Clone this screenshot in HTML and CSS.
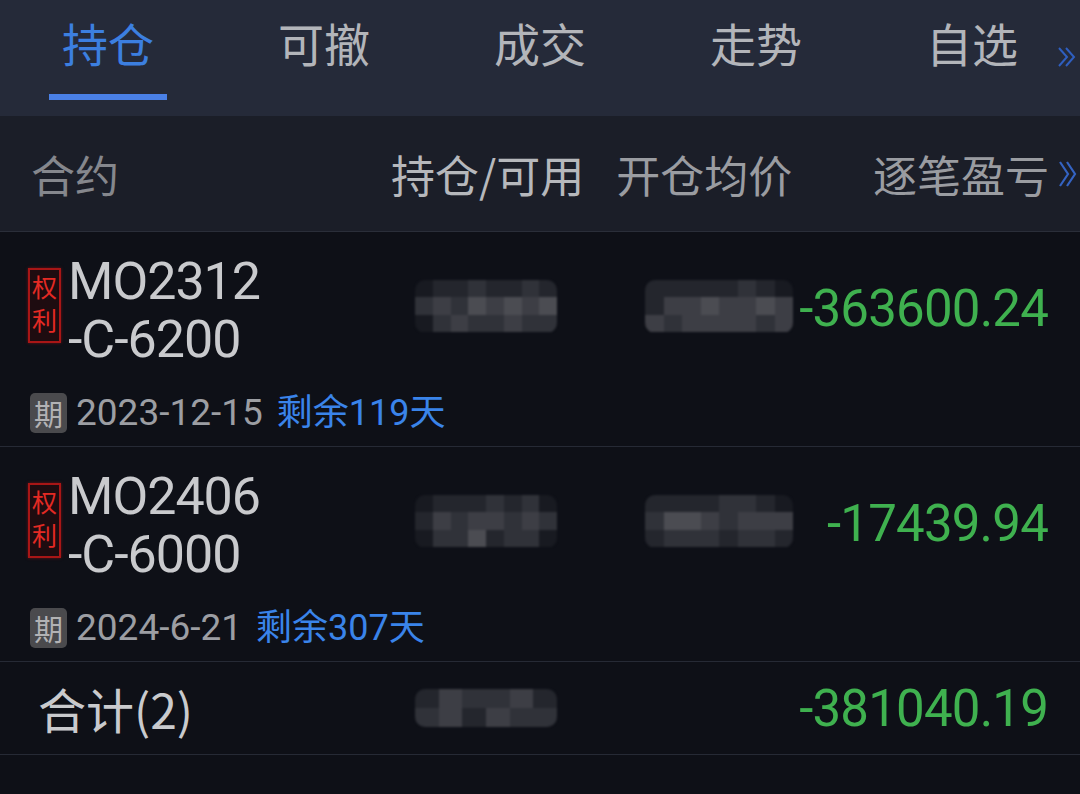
FILE: index.html
```html
<!DOCTYPE html>
<html lang="zh-CN">
<head>
    <meta charset="UTF-8">
    <meta name="viewport" content="width=device-width, initial-scale=1.0">
    <title>持仓</title>
<link rel="stylesheet" href="styles.css">
</head>
<body>
<div class="app">
    <nav class="tabs">
        <div class="tab active">持仓</div>
        <div class="tab">可撤</div>
        <div class="tab">成交</div>
        <div class="tab">走势</div>
        <div class="tab">自选</div>
        <svg class="more tabsMore" width="22" height="24" viewBox="0 0 22 24"><path d="M3 3 L11 12 L3 21 M10 3 L18 12 L10 21" fill="none" stroke="currentColor" stroke-width="2"/></svg>
    </nav>

    <div class="head">
        <div class="hContract">合约</div>
        <div class="hHold">持仓/可用</div>
        <div class="hAvg">开仓均价</div>
        <div class="hPnl">逐笔盈亏</div>
        <svg class="more" width="22" height="32" viewBox="0 0 22 32"><path d="M3 4 L11 16 L3 28 M10 4 L18 16 L10 28" fill="none" stroke="currentColor" stroke-width="2.2"/></svg>
    </div>

    <div class="row">
        <div class="rowMain">
            <div class="contract">
                <span class="tag">权<br>利</span>
                <div class="name">MO2312<br>-C-6200</div>
            </div>
            <div class="mask m1">
                <i class="s0"></i><i class="s1"></i><i class="s1"></i><i class="s2"></i><i class="s1"></i><i class="s1"></i><i class="s2"></i><i class="s1"></i>
                <i class="s2"></i><i class="s3"></i><i class="s2"></i><i class="s4"></i><i class="s3"></i><i class="s4"></i><i class="s3"></i><i class="s4"></i>
                <i class="s0"></i><i class="s2"></i><i class="s3"></i><i class="s2"></i><i class="s2"></i><i class="s3"></i><i class="s2"></i><i class="s2"></i>
            </div>
            <div class="mask m2">
                <i class="s1"></i><i class="s1"></i><i class="s1"></i><i class="s1"></i><i class="s1"></i><i class="s2"></i><i class="s1"></i><i class="s0"></i>
                <i class="s1"></i><i class="s3"></i><i class="s3"></i><i class="s4"></i><i class="s3"></i><i class="s3"></i><i class="s4"></i><i class="s3"></i>
                <i class="s3"></i><i class="s2"></i><i class="s3"></i><i class="s3"></i><i class="s3"></i><i class="s3"></i><i class="s2"></i><i class="s3"></i>
            </div>
            <div class="pnl">-363600.24</div>
        </div>
        <div class="expire">
            <span class="qi">期</span>
            <span class="date">2023-12-15</span>
            <span class="remain">剩余119天</span>
        </div>
    </div>

    <div class="row">
        <div class="rowMain">
            <div class="contract">
                <span class="tag">权<br>利</span>
                <div class="name">MO2406<br>-C-6000</div>
            </div>
            <div class="mask m1">
                <i class="s0"></i><i class="s1"></i><i class="s1"></i><i class="s1"></i><i class="s2"></i><i class="s1"></i><i class="s2"></i><i class="s0"></i>
                <i class="s1"></i><i class="s3"></i><i class="s2"></i><i class="s3"></i><i class="s3"></i><i class="s2"></i><i class="s3"></i><i class="s2"></i>
                <i class="s0"></i><i class="s2"></i><i class="s2"></i><i class="s4"></i><i class="s1"></i><i class="s2"></i><i class="s2"></i><i class="s0"></i>
            </div>
            <div class="mask m2">
                <i class="s1"></i><i class="s1"></i><i class="s1"></i><i class="s1"></i><i class="s2"></i><i class="s2"></i><i class="s1"></i><i class="s0"></i>
                <i class="s2"></i><i class="s4"></i><i class="s4"></i><i class="s3"></i><i class="s2"></i><i class="s3"></i><i class="s3"></i><i class="s3"></i>
                <i class="s1"></i><i class="s2"></i><i class="s2"></i><i class="s2"></i><i class="s1"></i><i class="s2"></i><i class="s2"></i><i class="s1"></i>
            </div>
            <div class="pnl">-17439.94</div>
        </div>
        <div class="expire">
            <span class="qi">期</span>
            <span class="date">2024-6-21</span>
            <span class="remain">剩余307天</span>
        </div>
    </div>

    <div class="total">
        <div class="totalLabel">合计(2)</div>
        <div class="mask m1 mSmall">
            <i class="s1"></i><i class="s3"></i><i class="s2"></i><i class="s2"></i><i class="s3"></i><i class="s1"></i>
            <i class="s2"></i><i class="s3"></i><i class="s1"></i><i class="s3"></i><i class="s2"></i><i class="s2"></i>
        </div>
        <div class="pnl">-381040.19</div>
    </div>
</div>
</body>
</html>
```

FILE: styles.css
```css
body{
    margin: 0;
    background-color: #0e1017;
    font-family: "Noto Sans", "Noto Sans CJK SC", sans-serif;
}
.app{
    width: 1080px;
    height: 794px;
    overflow: hidden;
    background-color: #0e1017;
}
.tabs{
    position: relative;
    display: flex;
    height: 116px;
    background-color: #252a39;
}
.tab{
    flex: 1;
    text-align: center;
    font-size: 46px;
    line-height: 46px;
    padding-top: 19px;
    color: #b3b5ba;
    font-family: "Noto Sans CJK SC", sans-serif;
}
.tab.active{
    color: #3c7fe0;
    position: relative;
}
.tab.active::after{
    content: "";
    position: absolute;
    left: 49px;
    top: 94px;
    width: 118px;
    height: 6px;
    background-color: #4a80e6;
}
.more{
    color: #2f5fc0;
    display: block;
}
.tabsMore{
    position: absolute;
    right: 2px;
    top: 45px;
}
.head{
    display: flex;
    align-items: center;
    height: 115px;
    padding-left: 31px;
    background-color: #1b1e28;
    border-bottom: 1px solid #2a2e39;
    font-family: "Noto Sans CJK SC", sans-serif;
    font-size: 44px;
    color: #9a9ca1;
}
.hContract{
    width: 360px;
    color: #85878d;
}
.hHold{
    color: #b6b8bc;
}
.hAvg{
    margin-left: 32px;
}
.hPnl{
    margin-left: auto;
}
.head .more{
    margin-left: 8px;
    margin-right: 1px;
    color: #3463c2;
}
.row{
    border-bottom: 1px solid #262a35;
    padding: 21px 32px 13px 28px;
}
.rowMain{
    display: flex;
    align-items: center;
}
.contract{
    width: 387px;
    display: flex;
    align-items: center;
}
.tag{
    box-sizing: border-box;
    width: 33px;
    height: 75px;
    margin-top: -12px;
    border: 2px solid #a81616;
    background-color: #1e0c10;
    color: #e42a24;
    font-family: "Noto Sans CJK SC", sans-serif;
    font-size: 25px;
    line-height: 33px;
    text-align: center;
    box-shadow: 0 0 3px rgba(200, 20, 20, 0.5);
}
.name{
    margin-left: 7px;
    font-family: Roboto, sans-serif;
    font-size: 52px;
    line-height: 58px;
    letter-spacing: -1px;
    color: #c9cacd;
}
.mask{
    display: grid;
    grid-template-columns: repeat(8, 1fr);
    grid-template-rows: repeat(3, 1fr);
    height: 53px;
    border-radius: 10px;
    overflow: hidden;
    filter: blur(1.2px);
    margin-top: -10px;
}
.m1{
    width: 142px;
}
.m2{
    width: 148px;
    margin-left: 88px;
}
.mask i{
    display: block;
}
.s0{ background-color: #181a21; }
.s1{ background-color: #24262d; }
.s2{ background-color: #303239; }
.s3{ background-color: #3d3e45; }
.s4{ background-color: #4b4c52; }
.pnl{
    margin-left: auto;
    font-family: Roboto, sans-serif;
    font-size: 51px;
    letter-spacing: -0.8px;
    color: #3fb14f;
    margin-top: -6px;
}
.expire{
    display: flex;
    align-items: center;
    height: 40px;
    line-height: 40px;
    margin-top: 24px;
    padding-left: 2px;
}
.qi{
    width: 37px;
    height: 40px;
    border-radius: 5px;
    background-color: #4a4a4d;
    color: #b2b2b4;
    font-family: "Noto Sans CJK SC", sans-serif;
    font-size: 29px;
    line-height: 40px;
    text-align: center;
}
.date{
    margin-left: 9px;
    font-family: Roboto, sans-serif;
    font-size: 37px;
    color: #9c9ea3;
}
.remain{
    margin-left: 14px;
    font-family: Roboto, "Noto Sans CJK SC", sans-serif;
    font-size: 36px;
    color: #3a84ea;
}
.total{
    display: flex;
    align-items: center;
    height: 92px;
    padding: 0 32px 0 38px;
    border-bottom: 1px solid #262a35;
}
.totalLabel{
    width: 377px;
    font-family: "Noto Sans CJK SC", sans-serif;
    font-size: 48px;
    color: #c9cacd;
}
.mSmall{
    grid-template-columns: repeat(6, 1fr);
    grid-template-rows: repeat(2, 1fr);
    height: 38px;
    margin-top: 0;
}
.total .pnl{
    margin-top: 0;
}
```
